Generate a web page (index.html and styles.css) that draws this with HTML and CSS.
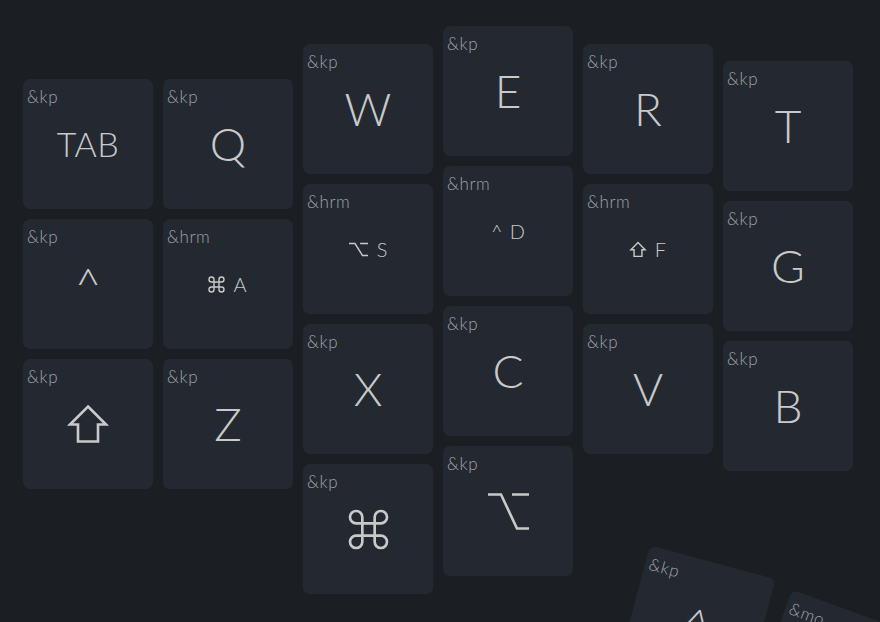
FILE: index.html
```html
<!DOCTYPE html>
<html lang="en">
<head>
<meta charset="UTF-8">
<title>Keymap</title>
<link rel="stylesheet" href="styles.css">
</head>
<body>
  <div class="board">

    <div class="col c0">
      <div class="key"><span class="tag">&amp;kp</span><span class="main word">TAB</span></div>
      <div class="key"><span class="tag">&amp;kp</span><span class="main">^</span></div>
      <div class="key"><span class="tag">&amp;kp</span>
        <svg class="main icon" width="40" height="38" viewBox="0 0 40 38"><path d="M20 1.5 L38 19.5 H30 V36.5 H10 V19.5 H2 Z" /></svg>
      </div>
    </div>

    <div class="col c1">
      <div class="key"><span class="tag">&amp;kp</span><span class="main">Q</span></div>
      <div class="key"><span class="tag">&amp;hrm</span>
        <span class="main small">
          <svg class="mini" width="15" height="15" viewBox="3 3 18 18"><path d="M15 6v12a3 3 0 1 0 3-3H6a3 3 0 1 0 3 3V6a3 3 0 1 0-3 3h12a3 3 0 1 0-3-3" /></svg>
          <span>A</span>
        </span>
      </div>
      <div class="key"><span class="tag">&amp;kp</span><span class="main">Z</span></div>
    </div>

    <div class="col c2">
      <div class="key"><span class="tag">&amp;kp</span><span class="main">W</span></div>
      <div class="key"><span class="tag">&amp;hrm</span>
        <span class="main small">
          <svg class="mini" width="19" height="13" viewBox="0 0 41 37" preserveAspectRatio="none"><path d="M0 1.5 H13 L29 35.5 H41 M24 1.5 H41" /></svg>
          <span>S</span>
        </span>
      </div>
      <div class="key"><span class="tag">&amp;kp</span><span class="main">X</span></div>
      <div class="key"><span class="tag">&amp;kp</span>
        <svg class="main icon" width="37" height="37" viewBox="3 3 18 18"><path class="thin" d="M15 6v12a3 3 0 1 0 3-3H6a3 3 0 1 0 3 3V6a3 3 0 1 0-3 3h12a3 3 0 1 0-3-3" /></svg>
      </div>
    </div>

    <div class="col c3">
      <div class="key"><span class="tag">&amp;kp</span><span class="main">E</span></div>
      <div class="key"><span class="tag">&amp;hrm</span><span class="main small"><span>^</span><span>D</span></span></div>
      <div class="key"><span class="tag">&amp;kp</span><span class="main">C</span></div>
      <div class="key"><span class="tag">&amp;kp</span>
        <svg class="main icon" width="41" height="37" viewBox="0 0 41 37"><path d="M0 1.5 H13 L29 35.5 H41 M24 1.5 H41" /></svg>
      </div>
    </div>

    <div class="col c4">
      <div class="key"><span class="tag">&amp;kp</span><span class="main">R</span></div>
      <div class="key"><span class="tag">&amp;hrm</span>
        <span class="main small">
          <svg class="mini" width="16" height="15" viewBox="0 0 40 38"><path d="M20 1.5 L38 19.5 H30 V36.5 H10 V19.5 H2 Z" /></svg>
          <span>F</span>
        </span>
      </div>
      <div class="key"><span class="tag">&amp;kp</span><span class="main">V</span></div>
    </div>

    <div class="col c5">
      <div class="key"><span class="tag">&amp;kp</span><span class="main">T</span></div>
      <div class="key"><span class="tag">&amp;kp</span><span class="main">G</span></div>
      <div class="key"><span class="tag">&amp;kp</span><span class="main">B</span></div>
    </div>

    <!-- thumb cluster, tilted -->
    <div class="key thumb t1"><span class="tag">&amp;kp</span><span class="main">^</span></div>
    <div class="key thumb t2"><span class="tag">&amp;mo</span><span class="main">NAV</span></div>

  </div>
</body>
</html>
```

FILE: styles.css
```css
html, body {
  margin: 0;
  padding: 0;
  overflow: hidden;
}

body {
  background: #1b1e23;
  font-family: Lato, "DejaVu Sans", sans-serif;
  color: #c9c9c9;
}

.board {
  position: relative;
  display: flex;
  align-items: flex-start;
  gap: 10px;
  padding-left: 23px;
  height: 622px;
}

.col {
  display: flex;
  flex-direction: column;
  gap: 10px;
}

.c0, .c1 { padding-top: 79px; }
.c2, .c4 { padding-top: 44px; }
.c3 { padding-top: 26px; }
.c5 { padding-top: 61px; }

.key {
  width: 130px;
  height: 130px;
  border-radius: 7px;
  background: #242931;
  display: grid;
}

.key > * {
  grid-area: 1 / 1;
}

.tag {
  align-self: start;
  justify-self: start;
  font-size: 17px;
  font-weight: 300;
  letter-spacing: 0.6px;
  line-height: 1;
  color: #a0a2a6;
  padding: 9px 0 0 4px;
}

.main {
  place-self: center;
  font-size: 46px;
  font-weight: 300;
  line-height: 1;
}

.main.word {
  font-size: 34px;
  letter-spacing: 0.5px;
}

.main.small {
  display: flex;
  align-items: center;
  gap: 7px;
  font-size: 20px;
}

.main.small svg {
  margin-right: 2px;
}

.icon, .mini {
  overflow: visible;
}

.icon path, .mini path {
  fill: none;
  stroke: #c9c9c9;
  stroke-width: 2.6;
  stroke-linejoin: miter;
}

.icon path.thin {
  stroke-width: 1.3;
  stroke-linecap: round;
  stroke-linejoin: round;
}

.mini path {
  stroke-width: 1.4;
  vector-effect: non-scaling-stroke;
}

.thumb {
  position: absolute;
}

.t1 {
  left: 631px;
  top: 560px;
  transform: rotate(15deg);
}

.t2 {
  left: 766px;
  top: 608px;
  transform: rotate(20deg);
}
```
